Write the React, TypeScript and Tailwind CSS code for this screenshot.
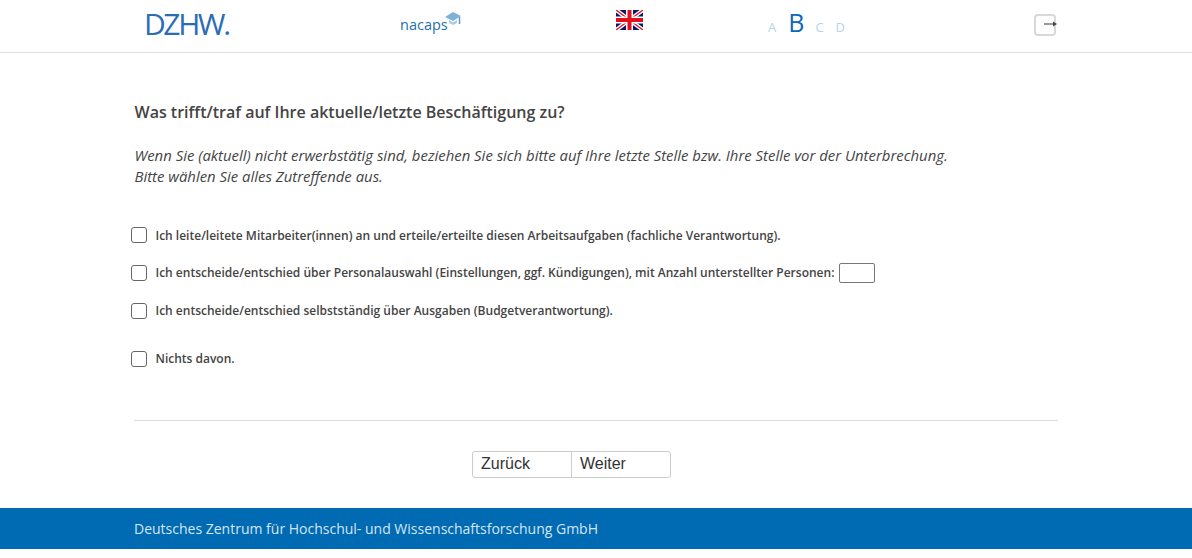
import React from 'react';

function Flag() {
  return (
    <svg width="27" height="20" viewBox="0 0 27 20" className="block">
      <rect width="27" height="20" fill="#0a1a6b" />
      <path d="M0 0L27 20M27 0L0 20" stroke="#fff" strokeWidth="4" />
      <path d="M0 0L27 20M27 0L0 20" stroke="#d8131f" strokeWidth="1.3" />
      <path d="M13.5 0V20M0 10H27" stroke="#fff" strokeWidth="7" />
      <path d="M13.5 0V20M0 10H27" stroke="#e0101c" strokeWidth="4" />
    </svg>
  );
}

function Cap() {
  return (
    <svg width="16" height="15" viewBox="0 0 16 15" className="block -ml-[3px]">
      <path d="M0 5L8 0L16 4L8 9Z" fill="#7fb2d8" />
      <path d="M4 8L8 10.5L12 8V11L8 13L4 11Z" fill="#a9cce6" />
      <path d="M14.5 5V12" stroke="#5c9ccb" strokeWidth="1.5" />
    </svg>
  );
}

function Option({ text, className = '', textClass = '', children }: { text: string; className?: string; textClass?: string; children?: React.ReactNode }) {
  return (
    <div className={`flex items-center h-[20px] ${className}`}>
      <span className="w-4 h-4 rounded-[3px] border border-[#666] bg-white shrink-0" />
      <span className={`ml-[8.5px] text-xs font-semibold text-[#444] ${textClass}`}>{text}</span>
      {children}
    </div>
  );
}

export default function App() {
  return (
    <div className="min-h-[558px] bg-white font-['Open_Sans',sans-serif] text-[#444]">
      <header className="h-[53px] border-b border-[#e0e0e0] flex relative">
        <div className="w-[400px] pl-[144px] pt-[4px]">
          <span className="text-[30px] leading-[40px] tracking-[-2.4px] font-normal text-[#2a6db5]">DZHW.</span>
        </div>
        <div className="w-[216px] flex items-start pt-[12px]">
          <span className="text-[14.5px] leading-[24px] text-[#1f6fb0] mt-[1px]">nacaps</span>
          <Cap />
        </div>
        <div className="w-[152px] pt-[10px]">
          <Flag />
        </div>
        <div className="w-[266px] flex items-baseline pt-[4px] text-[#b3d4ec]">
          <span className="text-[13px]">A</span>
          <span className="ml-[12px] text-[25px] leading-[36px] text-[#0a69b8]">B</span>
          <span className="ml-[11px] text-[13px]">C</span>
          <span className="ml-[12px] text-[13px]">D</span>
        </div>
        <div className="pt-[14px]">
          <div className="w-[22px] h-[22px] rounded-[4px] border-2 border-[#d8d8d8] relative">
            <svg width="16" height="8" viewBox="0 0 16 8" className="absolute left-[7px] top-[4px]">
              <path d="M1 4H11" stroke="#555" strokeWidth="1.2" />
              <path d="M10 1.5L14 4L10 6.5Z" fill="#444" />
            </svg>
          </div>
        </div>
      </header>

      <main className="mx-[134px]">
        <h1 className="mt-[47px] ml-[0.5px] text-base leading-[24px] font-semibold text-[#444]">
          Was trifft/traf auf Ihre aktuelle/letzte Beschäftigung zu?
        </h1>
        <p className="mt-[21px] ml-[0.5px] text-[14.9px] leading-[21px] italic text-[#444]">
          Wenn Sie (aktuell) nicht erwerbstätig sind, beziehen Sie sich bitte auf Ihre letzte Stelle bzw. Ihre Stelle vor der Unterbrechung.
          <br />
          Bitte wählen Sie alles Zutreffende aus.
        </p>

        <div className="mt-[38px] -ml-[3px]">
          <Option textClass="mt-[1px]" text="Ich leite/leitete Mitarbeiter(innen) an und erteile/erteilte diesen Arbeitsaufgaben (fachliche Verantwortung)." />
          <Option className="mt-[18px]" text="Ich entscheide/entschied über Personalauswahl (Einstellungen, ggf. Kündigungen), mit Anzahl unterstellter Personen:">
            <span className="ml-[4.5px] w-9 h-5 rounded-[2px] border border-[#777] bg-white" />
          </Option>
          <Option className="mt-[18px]" text="Ich entscheide/entschied selbstständig über Ausgaben (Budgetverantwortung)." />
          <Option className="mt-[28px]" text="Nichts davon." />
        </div>

        <div className="mt-[51px] border-t border-[#ddd]" />

        <div className="mt-[30px] pl-[338px] flex">
          <div className="flex w-[199px] h-[27px] rounded-[3px] border border-[#ccc] font-['Liberation_Sans',sans-serif] text-base leading-[22px] text-[#333]">
            <button className="w-[99px] text-left pl-[8px] pb-[1px] border-r border-[#ccc]">Zurück</button>
            <button className="flex-1 text-left pl-[8px] pb-[1px]">Weiter</button>
          </div>
        </div>
      </main>

      <footer className="mt-[30px] h-[41px] bg-[#006ab3] flex items-center pl-[134px] text-sm text-[#d5e6f3]">
        Deutsches Zentrum für Hochschul- und Wissenschaftsforschung GmbH
      </footer>
    </div>
  );
}
